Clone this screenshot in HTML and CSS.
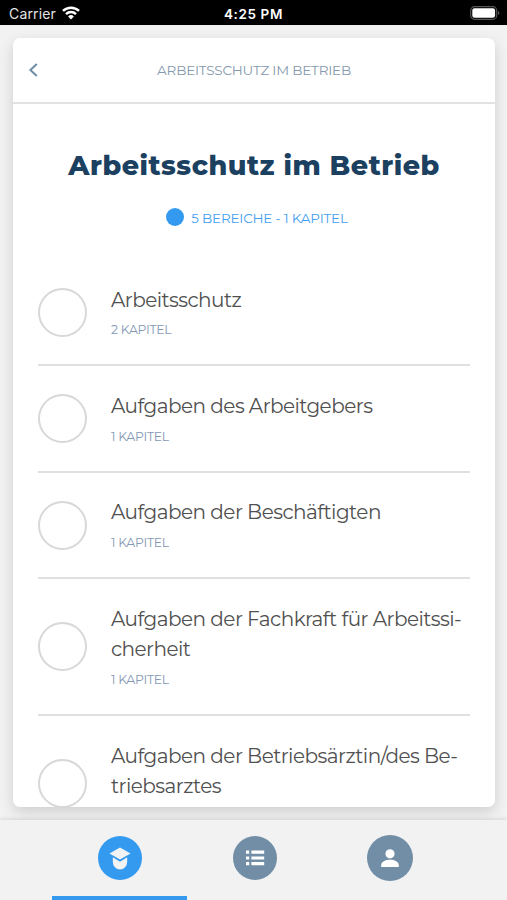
FILE: index.html
```html
<!DOCTYPE html>
<html lang="de">
<head>
<meta charset="utf-8">
<meta name="viewport" content="width=device-width, initial-scale=1">
<title>Arbeitsschutz im Betrieb</title>
<link rel="stylesheet" href="styles.css">
</head>
<body>
<div class="status">
  <div class="carrier"><span>Carrier</span>
    <svg width="18" height="14" viewBox="0 0 18 14" fill="none" stroke="#fff" stroke-width="2.5"><path d="M1 4.9a11.5 11.5 0 0 1 16 0M4 8.1a7.2 7.2 0 0 1 10 0"/><path d="M9 13.4 6.1 10.5a4.2 4.2 0 0 1 5.8 0z" fill="#fff" stroke="none"/></svg>
  </div>
  <div class="time">4:25 PM</div>
  <svg class="battery" width="30" height="14" viewBox="0 0 30 14"><rect x=".7" y=".7" width="26" height="12.6" rx="3.8" fill="none" stroke="#555" stroke-width="1.2"/><rect x="2.3" y="2.3" width="22.8" height="9.4" rx="2.2" fill="#fff"/><path d="M28 4.8q3 2.2 0 4.4z" fill="#555"/></svg>
</div>
<main class="page">
  <section class="card">
    <header class="bar">
      <svg class="back" width="10" height="16" viewBox="0 0 10 16" fill="none" stroke="#6f8fa9" stroke-width="2"><path d="M8.8 2 2.4 8l6.4 6"/></svg>
      <span class="bar-title">ARBEITSSCHUTZ IM BETRIEB</span>
    </header>
    <h1>Arbeitsschutz im Betrieb</h1>
    <div class="meta"><i class="dot"></i><span>5 BEREICHE - 1 KAPITEL</span></div>
    <ul class="list">
      <li><i class="ring"></i><div><h2>Arbeitsschutz</h2><p>2 KAPITEL</p></div></li>
      <li><i class="ring"></i><div><h2>Aufgaben des Arbeitgebers</h2><p>1 KAPITEL</p></div></li>
      <li><i class="ring"></i><div><h2>Aufgaben der Beschäftigten</h2><p>1 KAPITEL</p></div></li>
      <li><i class="ring"></i><div><h2>Aufgaben der Fachkraft für Arbeitssi-<br>cherheit</h2><p>1 KAPITEL</p></div></li>
      <li class="last"><i class="ring"></i><div><h2>Aufgaben der Betriebsärztin/des Be-<br>triebsarztes</h2></div></li>
    </ul>
  </section>
</main>
<nav class="tabs">
  <a class="tab active"><span class="disc"><svg width="44" height="44" viewBox="0 0 44 44" fill="#f3f3f3"><path d="M22 11.5 32.5 17.5 22 23.4 11.5 17.5z"/><path d="M14.8 21.3 22 25.8l7.2-4.5v4.5a7.2 7.6 0 0 1-14.4 0z"/></svg></span></a>
  <a class="tab"><span class="disc"><svg width="44" height="44" viewBox="0 0 44 44" fill="#fff"><path d="M13 14.6h3.2v3.2H13zM18.4 14.6h12.8v3.2H18.4zM13 20.4h3.2v3.2H13zM18.4 20.4h12.8v3.2H18.4zM13 26h3.2v3.2H13zM18.4 26h12.8v3.2H18.4z"/></svg></span></a>
  <a class="tab"><span class="disc large"><svg width="46" height="46" viewBox="0 0 46 46" fill="#fff"><circle cx="23" cy="18.8" r="4.6"/><path d="M14.2 32v-1.8c0-3.4 4.4-5.4 8.8-5.4s8.8 2 8.8 5.4V32z"/></svg></span></a>
</nav>
</body>
</html>
```
FILE: styles.css
```css
* { box-sizing: border-box; margin: 0; padding: 0; }
body {
  width: 507px; height: 900px; overflow: hidden;
  display: flex; flex-direction: column;
  background: #f2f2f2;
  font-family: Montserrat, Inter, "Liberation Sans", sans-serif;
}
.status {
  height: 25px; flex: none; background: #000; color: #fff;
  display: grid; grid-template-columns: 1fr auto 1fr; align-items: center;
  padding: 2px 7px 0 9px;
  font: 14px Inter, sans-serif;
}
.carrier { display: flex; align-items: center; gap: 6px; letter-spacing: .15px; color: #e4e4e4; }
.carrier svg { position: relative; top: -1px; }
.time { font-weight: 600; font-size: 13.5px; letter-spacing: .6px; margin-right: 2px; }
.battery { justify-self: end; position: relative; top: -1px; }
.page { flex: 1; min-height: 0; padding: 13px 12px 12px 13px; }
.card {
  height: 769px; overflow: hidden; background: #fff; border-radius: 7px;
  box-shadow: 0 5px 14px rgba(0, 0, 0, .15);
}
.bar {
  height: 66px; border-bottom: 2px solid #e2e2e2;
  display: grid; grid-template-columns: 40px 1fr 40px; align-items: center;
}
.back { margin-left: 15px; }
.bar-title { text-align: center; font-size: 13.5px; letter-spacing: -.2px; color: #8499ad; }
h1 {
  margin-top: 43.5px; text-align: center; white-space: nowrap;
  font-size: 27px; line-height: 36px; font-weight: 800; letter-spacing: .52px; color: #1c405f;
}
.meta {
  display: flex; justify-content: center; align-items: center; gap: 7px;
  height: 20px; margin-top: 24.5px; padding-left: 6px;
  font-size: 13.5px; letter-spacing: -.2px; color: #459ff0;
}
.dot { width: 18px; height: 18px; border-radius: 50%; background: #339af0; position: relative; top: -1px; }
.list { list-style: none; margin: 32px 25px 0; }
.list li {
  display: flex; align-items: center; gap: 24px;
  padding: 24.6px 0 19.4px; border-bottom: 2px solid #e0e0e0;
}
.list .last { padding-bottom: 0; border: 0; align-items: flex-start; }
.ring { width: 49px; height: 49px; flex: none; border: 2.5px solid #d8d8d8; border-radius: 50%; position: relative; top: -2.3px; }
.last .ring { top: 18px; }
h2 { font-size: 20px; line-height: 30.4px; font-weight: 400; letter-spacing: -.53px; color: #505050; white-space: nowrap; }
.list p { font-size: 12.4px; line-height: 30px; letter-spacing: -.28px; color: #8499b4; position: relative; top: .4px; }
.tabs {
  flex: none; height: 80px; display: flex; justify-content: center; padding-left: 1px;
  background: #f2f2f2; box-shadow: 0 -1px 4px rgba(0, 0, 0, .12); position: relative;
}
.tab { width: 135px; height: 80px; padding: 16px 0 0 2px; display: flex; justify-content: center; border-bottom: 4px solid transparent; }
.tab.active { border-color: #339af0; }
.disc { width: 44px; height: 44px; border-radius: 50%; background: #718ea6; }
.active .disc { background: #339af0; }
.disc.large { width: 46px; height: 46px; margin-top: -1px; }
```
